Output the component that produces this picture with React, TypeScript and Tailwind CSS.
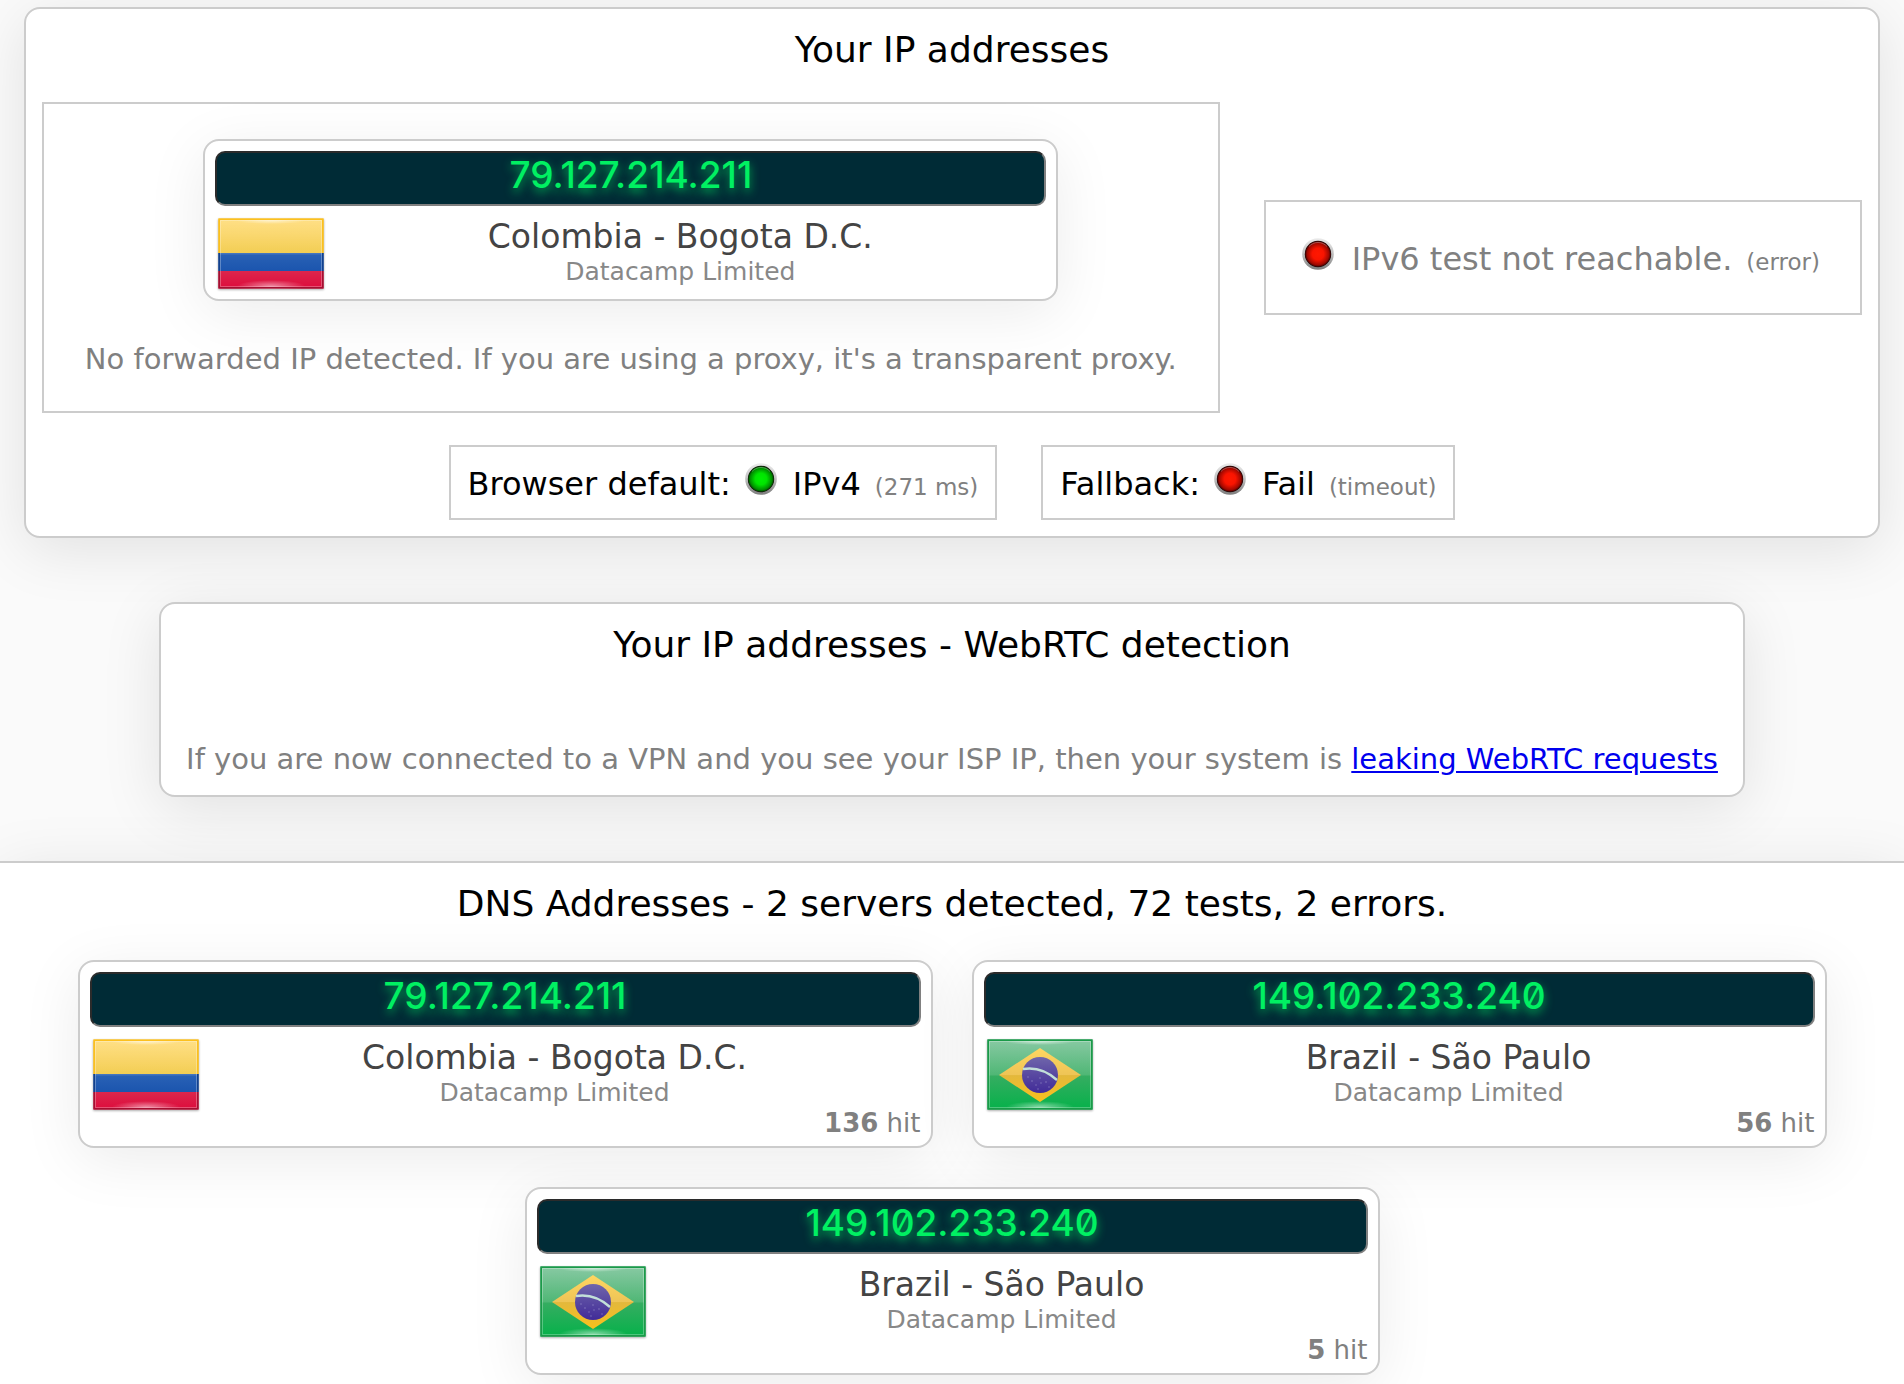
import type { ReactNode } from 'react';

type Server = {
  id: number;
  ip: string;
  country: 'co' | 'br';
  place: string;
  owner: string;
  hits?: number;
};

const myAddress: Server = {
  id: 0,
  ip: '79.127.214.211',
  country: 'co',
  place: 'Colombia - Bogota D.C.',
  owner: 'Datacamp Limited',
};

const dnsServers: Server[] = [
  { id: 1, ip: '79.127.214.211', country: 'co', place: 'Colombia - Bogota D.C.', owner: 'Datacamp Limited', hits: 136 },
  { id: 2, ip: '149.102.233.240', country: 'br', place: 'Brazil - São Paulo', owner: 'Datacamp Limited', hits: 56 },
  { id: 3, ip: '149.102.233.240', country: 'br', place: 'Brazil - São Paulo', owner: 'Datacamp Limited', hits: 5 },
];

function FlagGloss() {
  return (
    <>
      <rect x="1.5" y="1.5" width="103" height="35" fill="url(#gloss)" />
      <ellipse cx="53" cy="68" rx="34" ry="6" fill="url(#shine)" />
      <ellipse cx="53" cy="3" rx="34" ry="3" fill="url(#shine)" />
      <rect x="2.5" y="2.5" width="101" height="66" fill="none" stroke="#fff" strokeOpacity="0.28" />
    </>
  );
}

function Flag({ country }: { country: Server['country'] }) {
  return (
    <svg viewBox="0 0 106 71" className="w-[106px] h-[71px] shrink-0 drop-shadow-[0_1px_1px_rgba(0,0,0,0.35)]">
      <defs>
        <linearGradient id="gloss" x1="0" y1="0" x2="0" y2="1">
          <stop offset="0" stopColor="#fff" stopOpacity="0.38" />
          <stop offset="1" stopColor="#fff" stopOpacity="0.12" />
        </linearGradient>
        <radialGradient id="shine">
          <stop offset="0" stopColor="#fff" stopOpacity="0.5" />
          <stop offset="1" stopColor="#fff" stopOpacity="0" />
        </radialGradient>
        <linearGradient id="yellow" x1="0" y1="0" x2="0" y2="1">
          <stop offset="0" stopColor="#ffcc3c" />
          <stop offset="1" stopColor="#f0c63a" />
        </linearGradient>
        <linearGradient id="blue" x1="0" y1="0" x2="0" y2="1">
          <stop offset="0" stopColor="#2a62b6" />
          <stop offset="1" stopColor="#1b55ae" />
        </linearGradient>
        <linearGradient id="red" x1="0" y1="0" x2="0" y2="1">
          <stop offset="0" stopColor="#dc264c" />
          <stop offset="1" stopColor="#dd0c3c" />
        </linearGradient>
        <linearGradient id="green" x1="0" y1="0" x2="0" y2="1">
          <stop offset="0" stopColor="#3da869" />
          <stop offset="0.5" stopColor="#37ad62" />
          <stop offset="1" stopColor="#06b14a" />
        </linearGradient>
        <linearGradient id="diamond" x1="0" y1="0" x2="0" y2="1">
          <stop offset="0" stopColor="#ffd661" />
          <stop offset="0.5" stopColor="#eec456" />
          <stop offset="0.51" stopColor="#e3b83c" />
          <stop offset="1" stopColor="#f9c11c" />
        </linearGradient>
        <linearGradient id="globe" x1="0" y1="0" x2="0" y2="1">
          <stop offset="0" stopColor="#6f65aa" />
          <stop offset="1" stopColor="#412b98" />
        </linearGradient>
      </defs>
      {country === 'co' ? (
        <>
          <rect x="0.5" y="0.5" width="105" height="35" fill="url(#yellow)" />
          <rect x="0.5" y="35" width="105" height="18" fill="url(#blue)" />
          <rect x="0.5" y="53" width="105" height="17.500" fill="url(#red)" />
          <FlagGloss />
          <g fill="none" strokeWidth="1.6">
            <path d="M1.200 35V1.200H104.800V35" stroke="#fcc01e" />
            <path d="M1.200 35V53M104.800 35V53" stroke="#12408c" />
            <path d="M1.200 53V69.800H104.800V53" stroke="#a30f31" />
          </g>
        </>
      ) : (
        <>
          <rect x="0.5" y="0.5" width="105" height="70" fill="url(#green)" />
          <FlagGloss />
          <rect x="1.200" y="1.200" width="103.600" height="68.600" fill="none" stroke="#1a9a49" strokeWidth="1.6" />
          <path d="M53 9 94 36 53 63 12 36Z" fill="url(#diamond)" />
          <circle cx="53" cy="36" r="18" fill="url(#globe)" />
          <path d="M36 30C48 28 60 32 70 41" fill="none" stroke="#c2dfd8" strokeWidth="2.4" />
          <g fill="#8377bd">
            <circle cx="41" cy="38" r="0.8" />
            <circle cx="45" cy="42" r="0.8" />
            <circle cx="49" cy="46" r="0.7" />
            <circle cx="53" cy="39" r="0.8" />
            <circle cx="54" cy="44" r="0.7" />
            <circle cx="59" cy="43" r="0.8" />
            <circle cx="62" cy="48" r="0.7" />
            <circle cx="51" cy="50" r="0.7" />
          </g>
        </>
      )}
    </svg>
  );
}

function Led({ on }: { on?: boolean }) {
  return (
    <svg viewBox="0 0 32 32" className="w-8 h-8 shrink-0">
      <defs>
        <linearGradient id="bezel" x1="0" y1="0" x2="0" y2="1">
          <stop offset="0" stopColor="#ececec" />
          <stop offset="0.5" stopColor="#c0c0c0" />
          <stop offset="1" stopColor="#7c7c7c" />
        </linearGradient>
        <radialGradient id="ledOn">
          <stop offset="0" stopColor="#00f000" />
          <stop offset="0.45" stopColor="#00e400" />
          <stop offset="0.85" stopColor="#008d00" />
          <stop offset="1" stopColor="#003c00" />
        </radialGradient>
        <radialGradient id="ledOff">
          <stop offset="0" stopColor="#ff1800" />
          <stop offset="0.45" stopColor="#f91400" />
          <stop offset="0.85" stopColor="#a00800" />
          <stop offset="1" stopColor="#400000" />
        </radialGradient>
      </defs>
      <circle cx="16" cy="16" r="15.8" fill="url(#bezel)" />
      <circle cx="16" cy="16" r="13.2" fill="#1c0f0f" />
      <circle cx="16" cy="16" r="12.8" fill={on ? 'url(#ledOn)' : 'url(#ledOff)'} />
      <path d="M7 8.500A12 12 0 0 1 25 8.500" fill="none" stroke="#fff" strokeOpacity="0.3" />
    </svg>
  );
}

function Title({ children }: { children: ReactNode }) {
  return <h2 className="text-[36px] leading-[44px] text-center text-black">{children}</h2>;
}

function Note({ children }: { children: ReactNode }) {
  return <small className="ml-[14px] text-[23px] leading-7 text-[#808080]">{children}</small>;
}

function ServerCard({ server }: { server: Server }) {
  return (
    <div className="w-full max-w-[855px] bg-white border-2 border-[#ccc] rounded-2xl p-[10px] shadow-[0_12px_60px_rgba(0,0,0,0.08)]">
      <div className="bg-[#002b36] border-2 border-t-[#2b2b2b] border-l-[#2b2b2b] border-r-[#808080] border-b-[#808080] rounded-[10px] pb-2 text-center text-[#00f062] font-['Inter',sans-serif] font-medium text-[37px] leading-[43px] slashed-zero [text-shadow:0_4px_10px_#00f062aa]">
        {server.ip}
      </div>
      <div className="flex mt-3 pl-[3px] pr-[10px]">
        <Flag country={server.country} />
        <div className="flex-1 text-center">
          <div className="text-[33px] leading-[38px] text-[#444]">{server.place}</div>
          <div className="text-[25px] leading-8 text-[#888]">{server.owner}</div>
        </div>
      </div>
      {server.hits !== undefined && (
        <div className="text-right text-[26px] leading-[26px] text-[#808080]">
          <b>{server.hits}</b> hit
        </div>
      )}
    </div>
  );
}

export default function App() {
  return (
    <div className="min-h-screen overflow-hidden bg-[#fafafa] font-['DejaVu_Sans',sans-serif] pt-[7px] flex flex-col">
      <section className="mx-6 bg-white border-2 border-[#ccc] rounded-2xl px-4 pt-[19px] pb-4 shadow-[0_12px_60px_rgba(0,0,0,0.1)]">
        <Title>Your IP addresses</Title>
        <div className="mt-[30px] flex items-center gap-11">
          <div className="flex-1 border-2 border-[#ccc] pt-[35px] pb-[34px] flex flex-col items-center">
            <ServerCard server={myAddress} />
            <p className="mt-10 text-[29px] leading-9 text-[#808080]">
              No forwarded IP detected. If you are using a proxy, it's a transparent proxy.
            </p>
          </div>
          <div className="border-2 border-[#ccc] pl-9 pr-10 pt-9 pb-[34px] flex items-baseline text-[32px] leading-10 text-[#808080] whitespace-nowrap">
            <Led />
            <span className="ml-[18px]">IPv6 test not reachable.</span>
            <Note>(error)</Note>
          </div>
        </div>
        <div className="mt-8 flex justify-center gap-11 text-[32px] leading-10 text-black whitespace-nowrap">
          <div className="border-2 border-[#ccc] px-[17px] pt-4 pb-[14px] flex items-baseline">
            <span>Browser default:</span>
            <span className="ml-[14px] flex items-baseline">
              <Led on />
              <span className="ml-4">IPv4</span>
            </span>
            <Note>(271 ms)</Note>
          </div>
          <div className="border-2 border-[#ccc] px-[17px] pt-4 pb-[14px] flex items-baseline">
            <span>Fallback:</span>
            <span className="ml-[14px] flex items-baseline">
              <Led />
              <span className="ml-4">Fail</span>
            </span>
            <Note>(timeout)</Note>
          </div>
        </div>
      </section>

      <section className="mt-16 w-5/6 self-center bg-white border-2 border-[#ccc] rounded-2xl pt-[19px] pb-[18px] shadow-[0_12px_60px_rgba(0,0,0,0.1)]">
        <Title>Your IP addresses - WebRTC detection</Title>
        <p className="mt-[74px] text-center text-[29px] leading-9 text-[#808080]">
          If you are now connected to a VPN and you see your ISP IP, then your system is{' '}
          <a href="#webrtc" className="text-[#0000ee] underline">
            leaking WebRTC requests
          </a>
        </p>
      </section>

      <section className="mt-16 flex-1 bg-white border-t-2 border-[#ccc] px-4 pt-[19px] pb-2 shadow-[0_12px_60px_rgba(0,0,0,0.1)]">
        <Title>DNS Addresses - 2 servers detected, 72 tests, 2 errors.</Title>
        <div className="mt-[34px] flex flex-wrap justify-center gap-[39px]">
          {dnsServers.map((server) => (
            <ServerCard key={server.id} server={server} />
          ))}
        </div>
      </section>
    </div>
  );
}
